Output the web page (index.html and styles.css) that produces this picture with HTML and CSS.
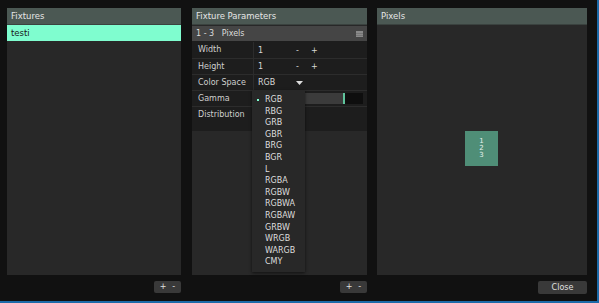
FILE: index.html
```html
<!DOCTYPE html>
<html>
<head>
<meta charset="utf-8">
<link rel="stylesheet" href="styles.css">
</head>
<body>
<div class="app">
  <div class="col col-fixtures">
    <div class="panel">
      <div class="panel-head">Fixtures</div>
      <div class="panel-body">
        <div class="fixture-row selected">testi</div>
      </div>
    </div>
    <div class="footer"><div class="btn pm"><span>+</span><span>-</span></div></div>
  </div>
  <div class="col col-params">
    <div class="panel">
      <div class="panel-head">Fixture Parameters</div>
      <div class="panel-body">
        <div class="sub-head"><span>1 - 3&nbsp;&nbsp;&nbsp;Pixels</span>
          <svg class="menu-ico" width="7" height="6" viewBox="0 0 7 6"><rect width="7" height="6" fill="#8a8a8a"/><rect y="2" width="7" height="0.6" fill="#6a6a6a"/><rect y="4" width="7" height="0.6" fill="#6a6a6a"/></svg>
        </div>
        <div class="params">
          <div class="prow"><div class="plabel">Width</div><div class="pval"><span class="num">1</span><span class="step">-</span><span class="step">+</span></div></div>
          <div class="prow"><div class="plabel">Height</div><div class="pval"><span class="num">1</span><span class="step">-</span><span class="step">+</span></div></div>
          <div class="prow"><div class="plabel">Color Space</div><div class="pval"><span class="num wide">RGB</span><svg class="caret" width="7" height="4" viewBox="0 0 7 4"><path d="M0 0H7L3.5 4Z" fill="#ddd"/></svg></div></div>
          <div class="prow"><div class="plabel">Gamma</div><div class="pval"><div class="slider"><div class="fill"></div><div class="thumb"></div></div></div></div>
          <div class="prow last"><div class="plabel">Distribution</div><div class="pval"></div></div>
        </div>
        <div class="dropdown">
          <div class="opt cur">RGB</div>
          <div class="opt">RBG</div>
          <div class="opt">GRB</div>
          <div class="opt">GBR</div>
          <div class="opt">BRG</div>
          <div class="opt">BGR</div>
          <div class="opt">L</div>
          <div class="opt">RGBA</div>
          <div class="opt">RGBW</div>
          <div class="opt">RGBWA</div>
          <div class="opt">RGBAW</div>
          <div class="opt">GRBW</div>
          <div class="opt">WRGB</div>
          <div class="opt">WARGB</div>
          <div class="opt">CMY</div>
        </div>
      </div>
    </div>
    <div class="footer"><div class="btn pm"><span>+</span><span>-</span></div></div>
  </div>
  <div class="col col-pixels">
    <div class="panel">
      <div class="panel-head">Pixels</div>
      <div class="panel-body canvas">
        <div class="pixel"><span>1</span><span>2</span><span>3</span></div>
      </div>
    </div>
    <div class="footer"><div class="btn close">Close</div></div>
  </div>
</div>
</body>
</html>
```

FILE: styles.css
```css
html, body {
  margin: 0;
  padding: 0;
  background: #111111;
}
body {
  width: 599px;
  height: 303px;
  overflow: hidden;
  font-family: "DejaVu Sans", Verdana, sans-serif;
  font-size: 8px;
  color: #d8d8d8;
}
.app {
  box-sizing: border-box;
  width: 599px;
  height: 303px;
  padding: 8px 10px 0 7px;
  display: flex;
  gap: 11px;
  border-right: 2px solid #1c6aa8;
  border-bottom: 2px solid #1c6aa8;
  background: #111111;
}
.col {
  display: flex;
  flex-direction: column;
}
.col-fixtures { width: 174px; }
.col-params { width: 175px; margin-right: -1px; }
.col-pixels { width: 210px; }
.panel {
  height: 267px;
  display: flex;
  flex-direction: column;
  background: #282828;
}
.panel-head {
  height: 16px;
  line-height: 16px;
  padding-left: 4px;
  background: #4b5853;
  border-bottom: 1px solid #3a423f;
  color: #e6e6e6;
  font-size: 8.5px;
  flex: none;
}
.panel-body {
  flex: 1;
  position: relative;
}
.fixture-row {
  height: 16px;
  line-height: 16px;
  padding-left: 4px;
  font-size: 8.5px;
}
.fixture-row.selected {
  background: #7ffdcf;
  color: #1a1a1a;
}
.sub-head {
  height: 15px;
  margin-top: 1px;
  background: #454545;
  display: flex;
  align-items: center;
  justify-content: space-between;
  padding: 0 4px 0 4px;
  color: #dcdcdc;
}
.params {
  background: #1d1d1d;
  padding-bottom: 9px;
}
.prow {
  height: 16px;
  display: flex;
  border-top: 1px solid #2c2c2c;
  box-sizing: border-box;
}
.prow:first-child { border-top: none; height: 17px; padding-top: 1px; }
.plabel {
  width: 55px;
  padding-left: 6px;
  line-height: 16px;
  border-right: 1px solid #2c2c2c;
  color: #cfcfcf;
}
.pval {
  flex: 1;
  display: flex;
  align-items: center;
  padding-left: 4px;
}
.num { width: 38px; }
.num.wide { width: 38px; }
.step { width: 15px; }
.slider {
  width: 105px;
  height: 11px;
  display: flex;
  background: #0e0e0e;
}
.slider .fill { width: 85px; background: #3b3b3b; }
.slider .thumb { width: 2px; background: #5fc49c; }
.dropdown {
  position: absolute;
  left: 60px;
  top: 65px;
  width: 53px;
  padding: 4px 0 4px 0;
  background: #282828;
  box-shadow: 0 1px 3px rgba(0,0,0,0.6);
}
.opt {
  height: 11.6px;
  line-height: 11.6px;
  padding-left: 13px;
  position: relative;
  color: #dedede;
}
.opt.cur::before {
  content: "";
  position: absolute;
  left: 5px;
  top: 5px;
  width: 2px;
  height: 2px;
  background: #7ffdcf;
}
.canvas {
  display: flex;
  align-items: center;
  justify-content: center;
}
.pixel {
  width: 33px;
  height: 35px;
  background: #4f8e77;
  display: flex;
  flex-direction: column;
  align-items: center;
  justify-content: center;
  font-size: 7px;
  line-height: 7px;
  color: #e6f2ee;
  margin-left: -1px;
  margin-top: -4px;
}
.footer {
  display: flex;
  justify-content: flex-end;
  padding-top: 6px;
}
.btn {
  background: #393939;
  border-radius: 2px;
  color: #e0e0e0;
  height: 12px;
  line-height: 12px;
}
.pm {
  width: 27px;
  display: flex;
  justify-content: space-evenly;
}
.close {
  width: 49px;
  height: 13px;
  line-height: 13px;
  text-align: center;
}
```
